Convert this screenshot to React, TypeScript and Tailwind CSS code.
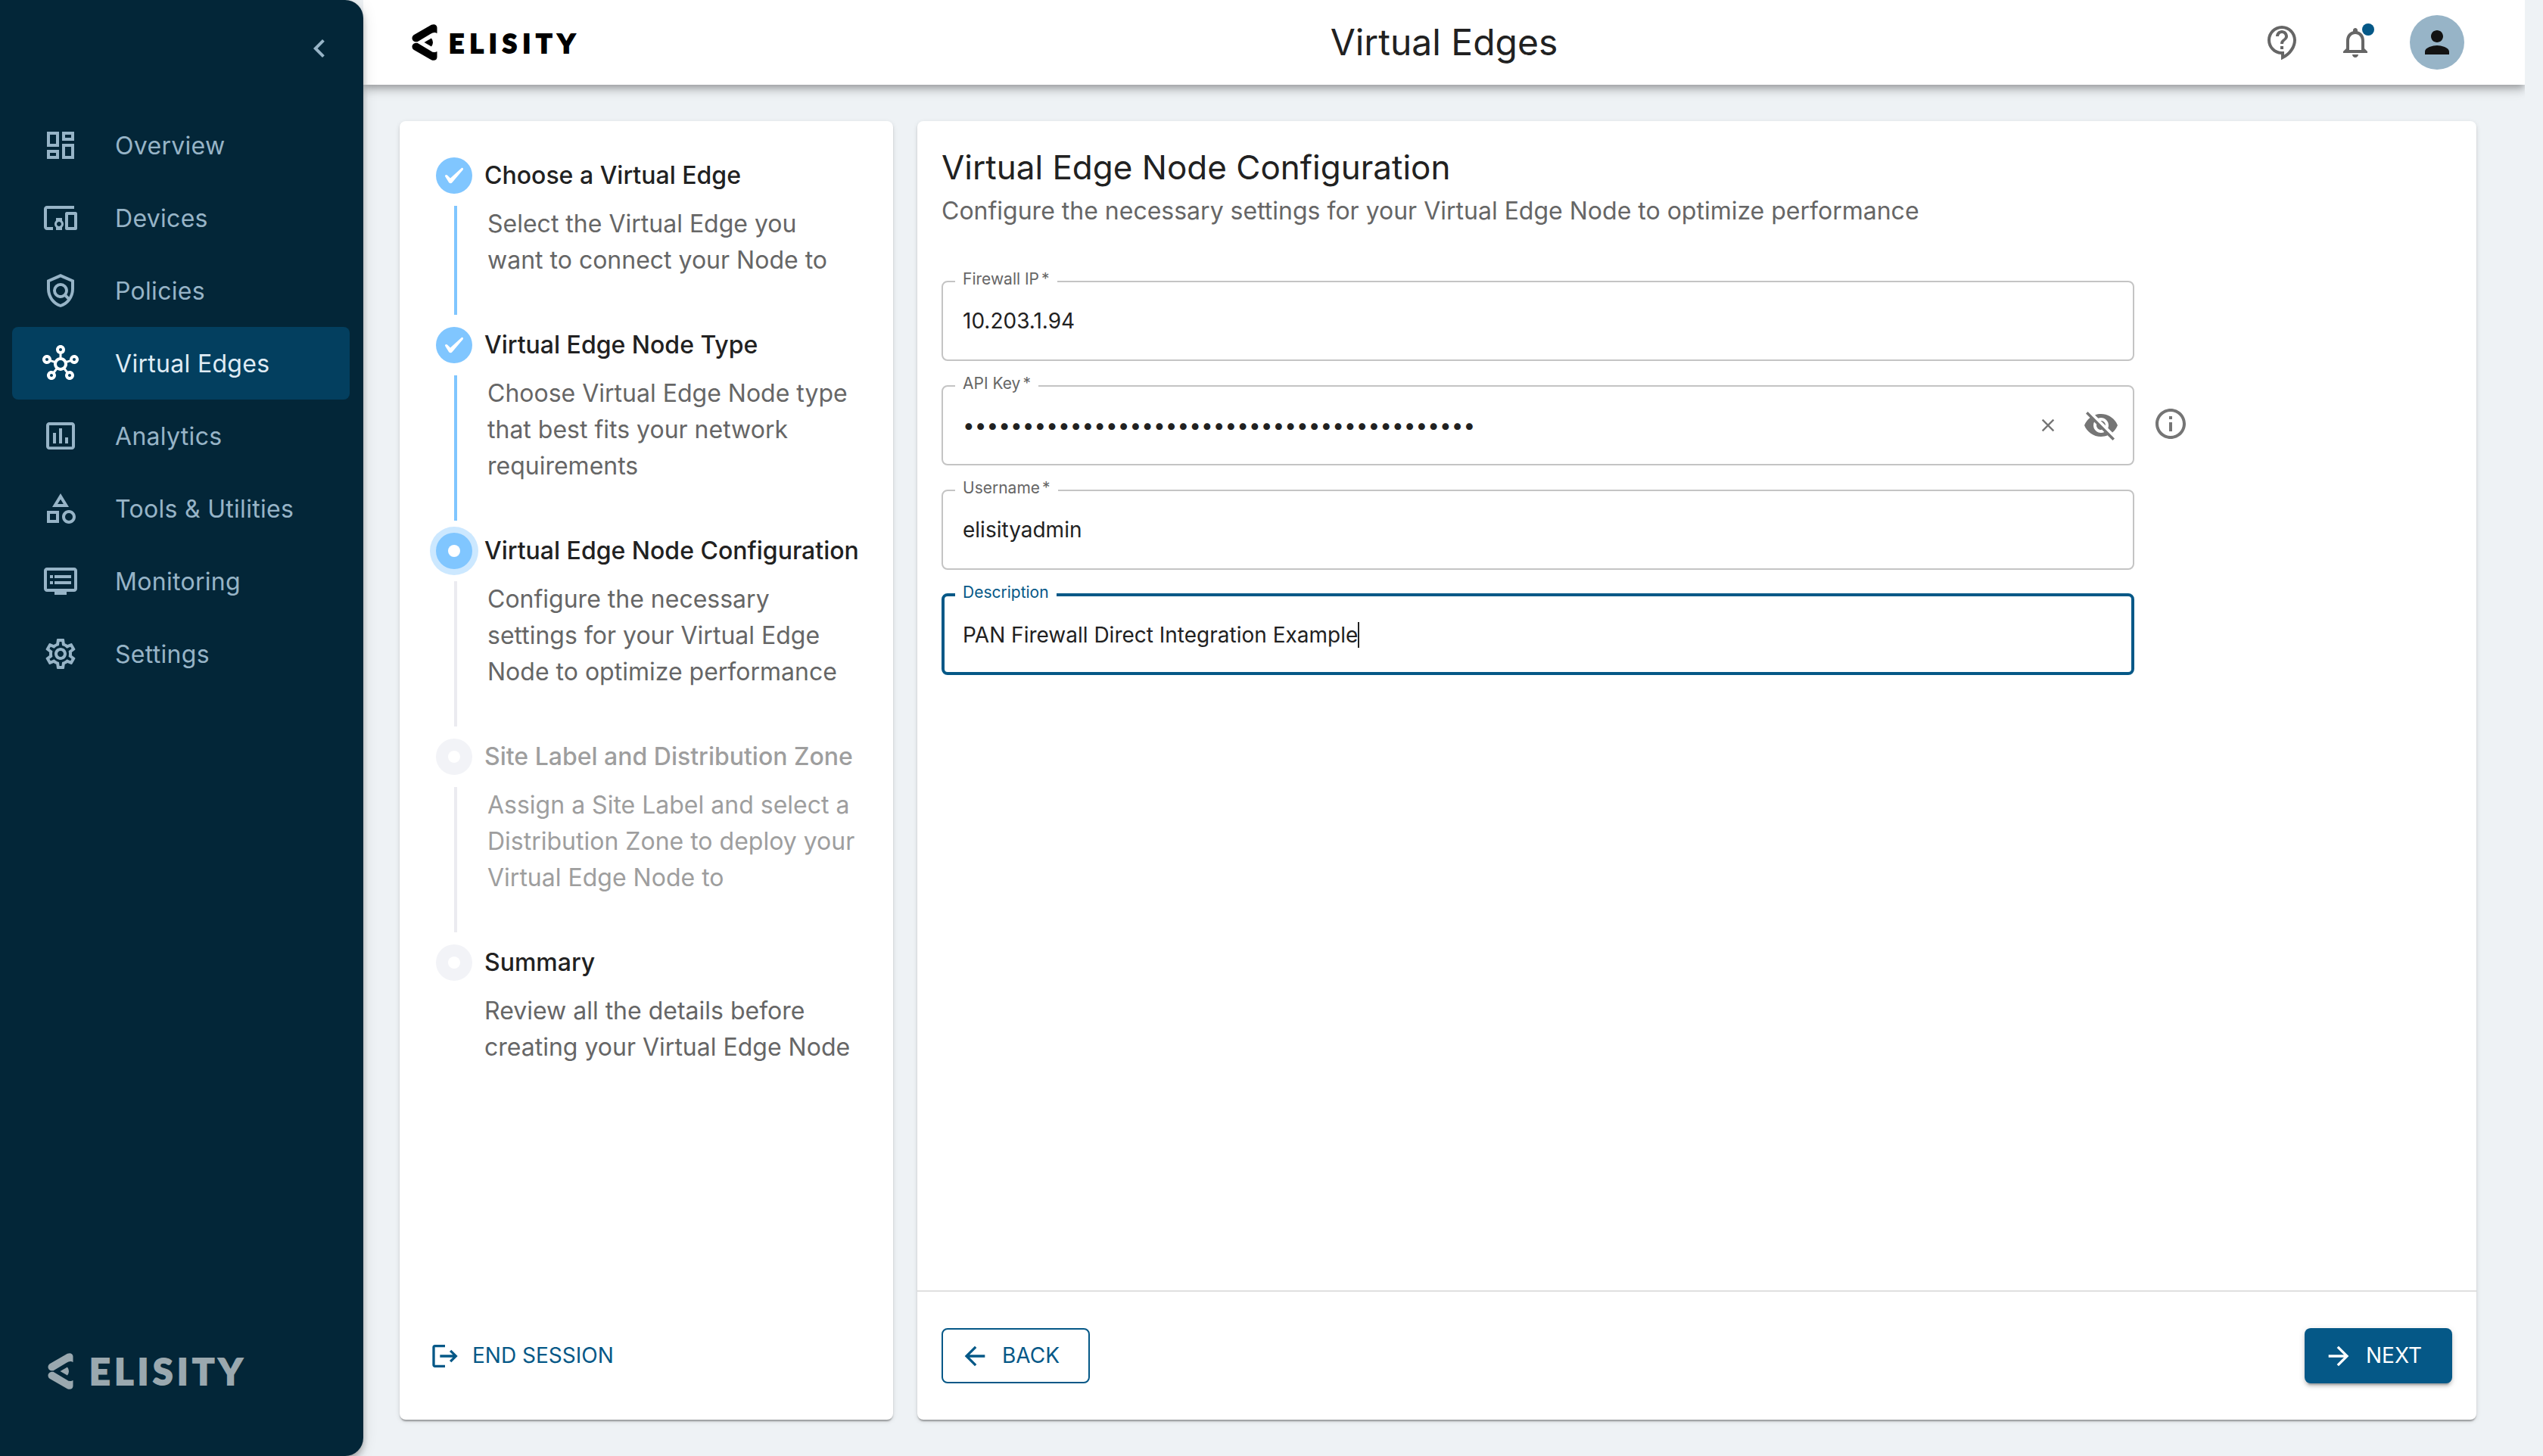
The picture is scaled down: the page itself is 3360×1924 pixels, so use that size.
import type { ReactNode } from 'react';
import type { IconType } from 'react-icons';
import {
  MdArrowBack,
  MdArrowForward,
  MdChevronLeft,
  MdClose,
  MdDevicesOther,
  MdInsertChartOutlined,
  MdLogout,
  MdNotificationsNone,
  MdOutlineCategory,
  MdOutlineContactSupport,
  MdOutlineDashboard,
  MdOutlineDvr,
  MdOutlineHub,
  MdOutlineInfo,
  MdOutlinePolicy,
  MdOutlineSettings,
  MdPerson,
  MdVisibilityOff,
} from 'react-icons/md';

interface NavItem {
  label: string;
  icon: IconType;
  active?: boolean;
}

const NAV_ITEMS: NavItem[] = [
  { label: 'Overview', icon: MdOutlineDashboard },
  { label: 'Devices', icon: MdDevicesOther },
  { label: 'Policies', icon: MdOutlinePolicy },
  { label: 'Virtual Edges', icon: MdOutlineHub, active: true },
  { label: 'Analytics', icon: MdInsertChartOutlined },
  { label: 'Tools & Utilities', icon: MdOutlineCategory },
  { label: 'Monitoring', icon: MdOutlineDvr },
  { label: 'Settings', icon: MdOutlineSettings },
];

type StepState = 'done' | 'current' | 'disabled' | 'pending';

interface Step {
  title: string;
  lines: string[];
  state: StepState;
}

const STEPS: Step[] = [
  {
    title: 'Choose a Virtual Edge',
    lines: ['Select the Virtual Edge you', 'want to connect your Node to'],
    state: 'done',
  },
  {
    title: 'Virtual Edge Node Type',
    lines: ['Choose Virtual Edge Node type', 'that best fits your network', 'requirements'],
    state: 'done',
  },
  {
    title: 'Virtual Edge Node Configuration',
    lines: ['Configure the necessary', 'settings for your Virtual Edge', 'Node to optimize performance'],
    state: 'current',
  },
  {
    title: 'Site Label and Distribution Zone',
    lines: ['Assign a Site Label and select a', 'Distribution Zone to deploy your', 'Virtual Edge Node to'],
    state: 'disabled',
  },
  {
    title: 'Summary',
    lines: ['Review all the details before', 'creating your Virtual Edge Node'],
    state: 'pending',
  },
];

function LogoMark() {
  return (
    <svg width="34" height="48" viewBox="0 0 34 48" fill="currentColor">
      <path d="M26 .8C30-1 33.500 1 33.500 4.500V12L31 11Q28 10.500 25 12.800L7.500 23.200C3.500 24 .5 21.500 .5 18.500 .5 16.500 1.500 15 3 14Z" />
      <path d="M26 47.200C30 49 33.500 47 33.500 43.500V36L31 37Q28 37.500 25 35.200L7.500 24.800C3.500 24 .5 26.500 .5 29.500 .5 31.500 1.500 33 3 34Z" />
      <path d="M16.500 24 26 18.500Q30 24 26 29.500Z" />
    </svg>
  );
}

function Sidebar() {
  return (
    <aside className="relative z-20 flex w-[480px] shrink-0 flex-col rounded-r-[24px] bg-[#032638] shadow-[0_4px_8px_-2px_rgba(0,0,0,0.2),0_8px_10px_0_rgba(0,0,0,0.14),0_2px_20px_0_rgba(0,0,0,0.12)]">
      <div className="flex h-32 items-center justify-end pr-[34px]">
        <MdChevronLeft className="size-12 text-[#97b4c7]" />
      </div>
      <nav className="mt-4 flex flex-col pr-[18px] pl-4">
        {NAV_ITEMS.map(({ label, icon: Icon, active }) => (
          <a
            key={label}
            className={`flex h-24 items-center gap-12 rounded-lg pl-10 text-[32px] tracking-[0.3px] ${
              active ? 'bg-[#033f5f] text-[#dfebf4]' : 'text-[#97b4c7]'
            }`}
          >
            <Icon className={`size-12 ${active ? 'text-white' : ''}`} />
            <span className="pt-px">{label}</span>
          </a>
        ))}
      </nav>
      <div className="mt-auto flex items-center gap-[21px] pb-[88px] pl-[63px] text-[#9aa8af]">
        <LogoMark />
        <span className="font-['Lato',sans-serif] text-[48px] leading-[48px] font-black tracking-[5.6px] [-webkit-text-stroke:2px_currentColor]">
          ELISITY
        </span>
      </div>
    </aside>
  );
}

function TopBar() {
  return (
    <div className="relative z-10 h-[144px] overflow-hidden">
      <header className="flex h-28 items-center justify-between bg-white pr-20 pl-16 shadow-[0_4px_8px_-2px_rgba(0,0,0,0.2),0_8px_10px_0_rgba(0,0,0,0.14),0_2px_20px_0_rgba(0,0,0,0.12)]">
        <div className="flex w-[280px] items-center gap-[15px] text-black">
          <LogoMark />
          <span className="font-['Lato',sans-serif] text-[35px] leading-[48px] font-black tracking-[7.3px] [-webkit-text-stroke:2px_currentColor]">
            ELISITY
          </span>
        </div>
        <h1 className="text-[48px] leading-[64px] text-[#212121]">Virtual Edges</h1>
        <div className="flex w-[264px] items-center text-[#666]">
          <MdOutlineContactSupport className="size-12" />
          <div className="relative ml-12">
            <MdNotificationsNone className="size-12" />
            <span className="absolute -top-px -right-px size-4 rounded-full bg-[#055887]" />
          </div>
          <div className="ml-12 flex size-[72px] items-center justify-center rounded-full bg-[#97b4c7]">
            <MdPerson className="size-12 text-[#131313]" />
          </div>
        </div>
      </header>
    </div>
  );
}

function StepIcon({ state }: { state: StepState }) {
  if (state === 'done') {
    return (
      <span className="flex size-12 items-center justify-center rounded-full bg-[#80c6ff]">
        <svg width="26" height="22" viewBox="0 0 26 22" fill="#fff">
          <path d="M1.200 12.200C.2 10.600 2.600 9.200 4 10.600L8 14.600 22.600 1.200C24 .2 25.800 1.600 24.800 3.200L10.600 20C9.400 21.600 7.200 21.600 6 20Z" />
        </svg>
      </span>
    );
  }
  return (
    <span
      className={`flex size-12 items-center justify-center rounded-full ${
        state === 'current' ? 'bg-[#80c6ff] ring-8 ring-[#cce8ff]' : 'bg-[#f2f3f7]'
      }`}
    >
      <span className="size-4 rounded-full bg-white" />
    </span>
  );
}

function StepItem({ step, last }: { step: Step; last: boolean }) {
  const disabled = step.state === 'disabled';

  return (
    <li>
      <div className="flex h-12 items-center gap-4">
        <StepIcon state={step.state} />
        <span
          className={`text-[32px] font-medium whitespace-nowrap ${
            disabled ? 'text-[#9e9e9e]' : 'text-[#212121]'
          }`}
        >
          {step.title}
        </span>
      </div>
      <div
        className={`my-4 text-[32px] leading-[48px] whitespace-nowrap ${
          disabled ? 'text-[#9e9e9e]' : 'text-[#666]'
        } ${
          last
            ? 'ml-16'
            : `ml-6 border-l-4 pb-12 pl-10 ${step.state === 'done' ? 'border-[#80c6ff]' : 'border-[#ebebf0]'}`
        }`}
      >
        {step.lines.map((line) => (
          <p key={line}>{line}</p>
        ))}
      </div>
    </li>
  );
}

interface FieldProps {
  label: string;
  required?: boolean;
  focused?: boolean;
  trailing?: ReactNode;
  children: ReactNode;
}

function Field({ label, required, focused, trailing, children }: FieldProps) {
  return (
    <div
      className={`relative flex w-[1576px] items-center justify-between rounded-lg text-[28px] text-[#212121] ${
        focused
          ? '-my-px h-[108px] border-4 border-[#055887] pt-0.5 pl-6'
          : 'h-[106px] border-2 border-[#c4c4c4] pl-[26px]'
      }`}
    >
      <span
        className={`absolute bg-white px-2.5 text-[21px] leading-[26px] ${
          focused ? '-top-[18px] left-[14px] text-[#055887]' : '-top-[17px] left-4 text-[#666]'
        }`}
      >
        {label}
        {required && <span className="ml-[3px]">*</span>}
      </span>
      {children}
      {trailing}
    </div>
  );
}

const CARD =
  'flex flex-col rounded-lg bg-white shadow-[0_4px_2px_-2px_rgba(0,0,0,0.2),0_2px_2px_0_rgba(0,0,0,0.14),0_2px_6px_0_rgba(0,0,0,0.12)]';

export default function App() {
  return (
    <div className="flex h-[1924px] w-[3360px] bg-[#eef2f5] font-['Inter',sans-serif]">
      <Sidebar />
      <div className="flex w-[2856px] flex-col">
        <TopBar />
        <main className="mt-4 mb-12 ml-12 flex flex-1 gap-8 pr-16">
          <section className={`${CARD} w-[652px] pt-12 pl-12`}>
            <ol>
              {STEPS.map((step, i) => (
                <StepItem key={step.title} step={step} last={i === STEPS.length - 1} />
              ))}
            </ol>
            <button
              type="button"
              className="mt-auto mb-[64px] -ml-2 flex h-10 items-center gap-4 text-[28px] text-[#055887]"
            >
              <MdLogout className="size-10" />
              <span className="pb-0.5">END SESSION</span>
            </button>
          </section>

          <section className={`${CARD} flex-1`}>
            <div className="flex-1 px-8 pt-[31px]">
              <h2 className="text-[44px] leading-[60px] text-[#212121]">Virtual Edge Node Configuration</h2>
              <p className="mt-px text-[32px] leading-[54px] text-[#666]">
                Configure the necessary settings for your Virtual Edge Node to optimize performance
              </p>
              <div className="mt-[65px] flex flex-col gap-8">
                <Field label="Firewall IP" required>
                  10.203.1.94
                </Field>
                <div className="flex items-center gap-6">
                  <Field
                    label="API Key"
                    required
                    trailing={
                      <span className="flex items-center gap-8 pr-[18px] text-[#757575]">
                        <MdClose className="size-7" />
                        <MdVisibilityOff className="size-12" />
                      </span>
                    }
                  >
                    <span>{'•'.repeat(43)}</span>
                  </Field>
                  <MdOutlineInfo className="-mt-1 size-12 text-[#757575]" />
                </div>
                <Field label="Username" required>
                  elisityadmin
                </Field>
                <Field label="Description" focused>
                  <span className="flex items-center">
                    PAN Firewall Direct Integration Example
                    <span className="h-[34px] w-0.5 bg-[#212121]" />
                  </span>
                </Field>
              </div>
            </div>
            <footer className="flex h-[171px] items-start justify-between border-t-2 border-[#e0e0e0] px-8 pt-12 text-[28px]">
              <button
                type="button"
                className="flex h-[73px] w-[196px] items-center gap-4 rounded-lg border-2 border-[#055887] pl-[22px] text-[#055887]"
              >
                <MdArrowBack className="size-10" />
                <span className="pb-0.5">BACK</span>
              </button>
              <button
                type="button"
                className="flex h-[73px] w-[195px] items-center gap-4 rounded-lg bg-[#055887] pl-[25px] text-white shadow-[0_6px_2px_-4px_rgba(0,0,0,0.2),0_4px_4px_0_rgba(0,0,0,0.14),0_2px_10px_0_rgba(0,0,0,0.12)]"
              >
                <MdArrowForward className="size-10" />
                <span className="pb-0.5">NEXT</span>
              </button>
            </footer>
          </section>
        </main>
      </div>
    </div>
  );
}
